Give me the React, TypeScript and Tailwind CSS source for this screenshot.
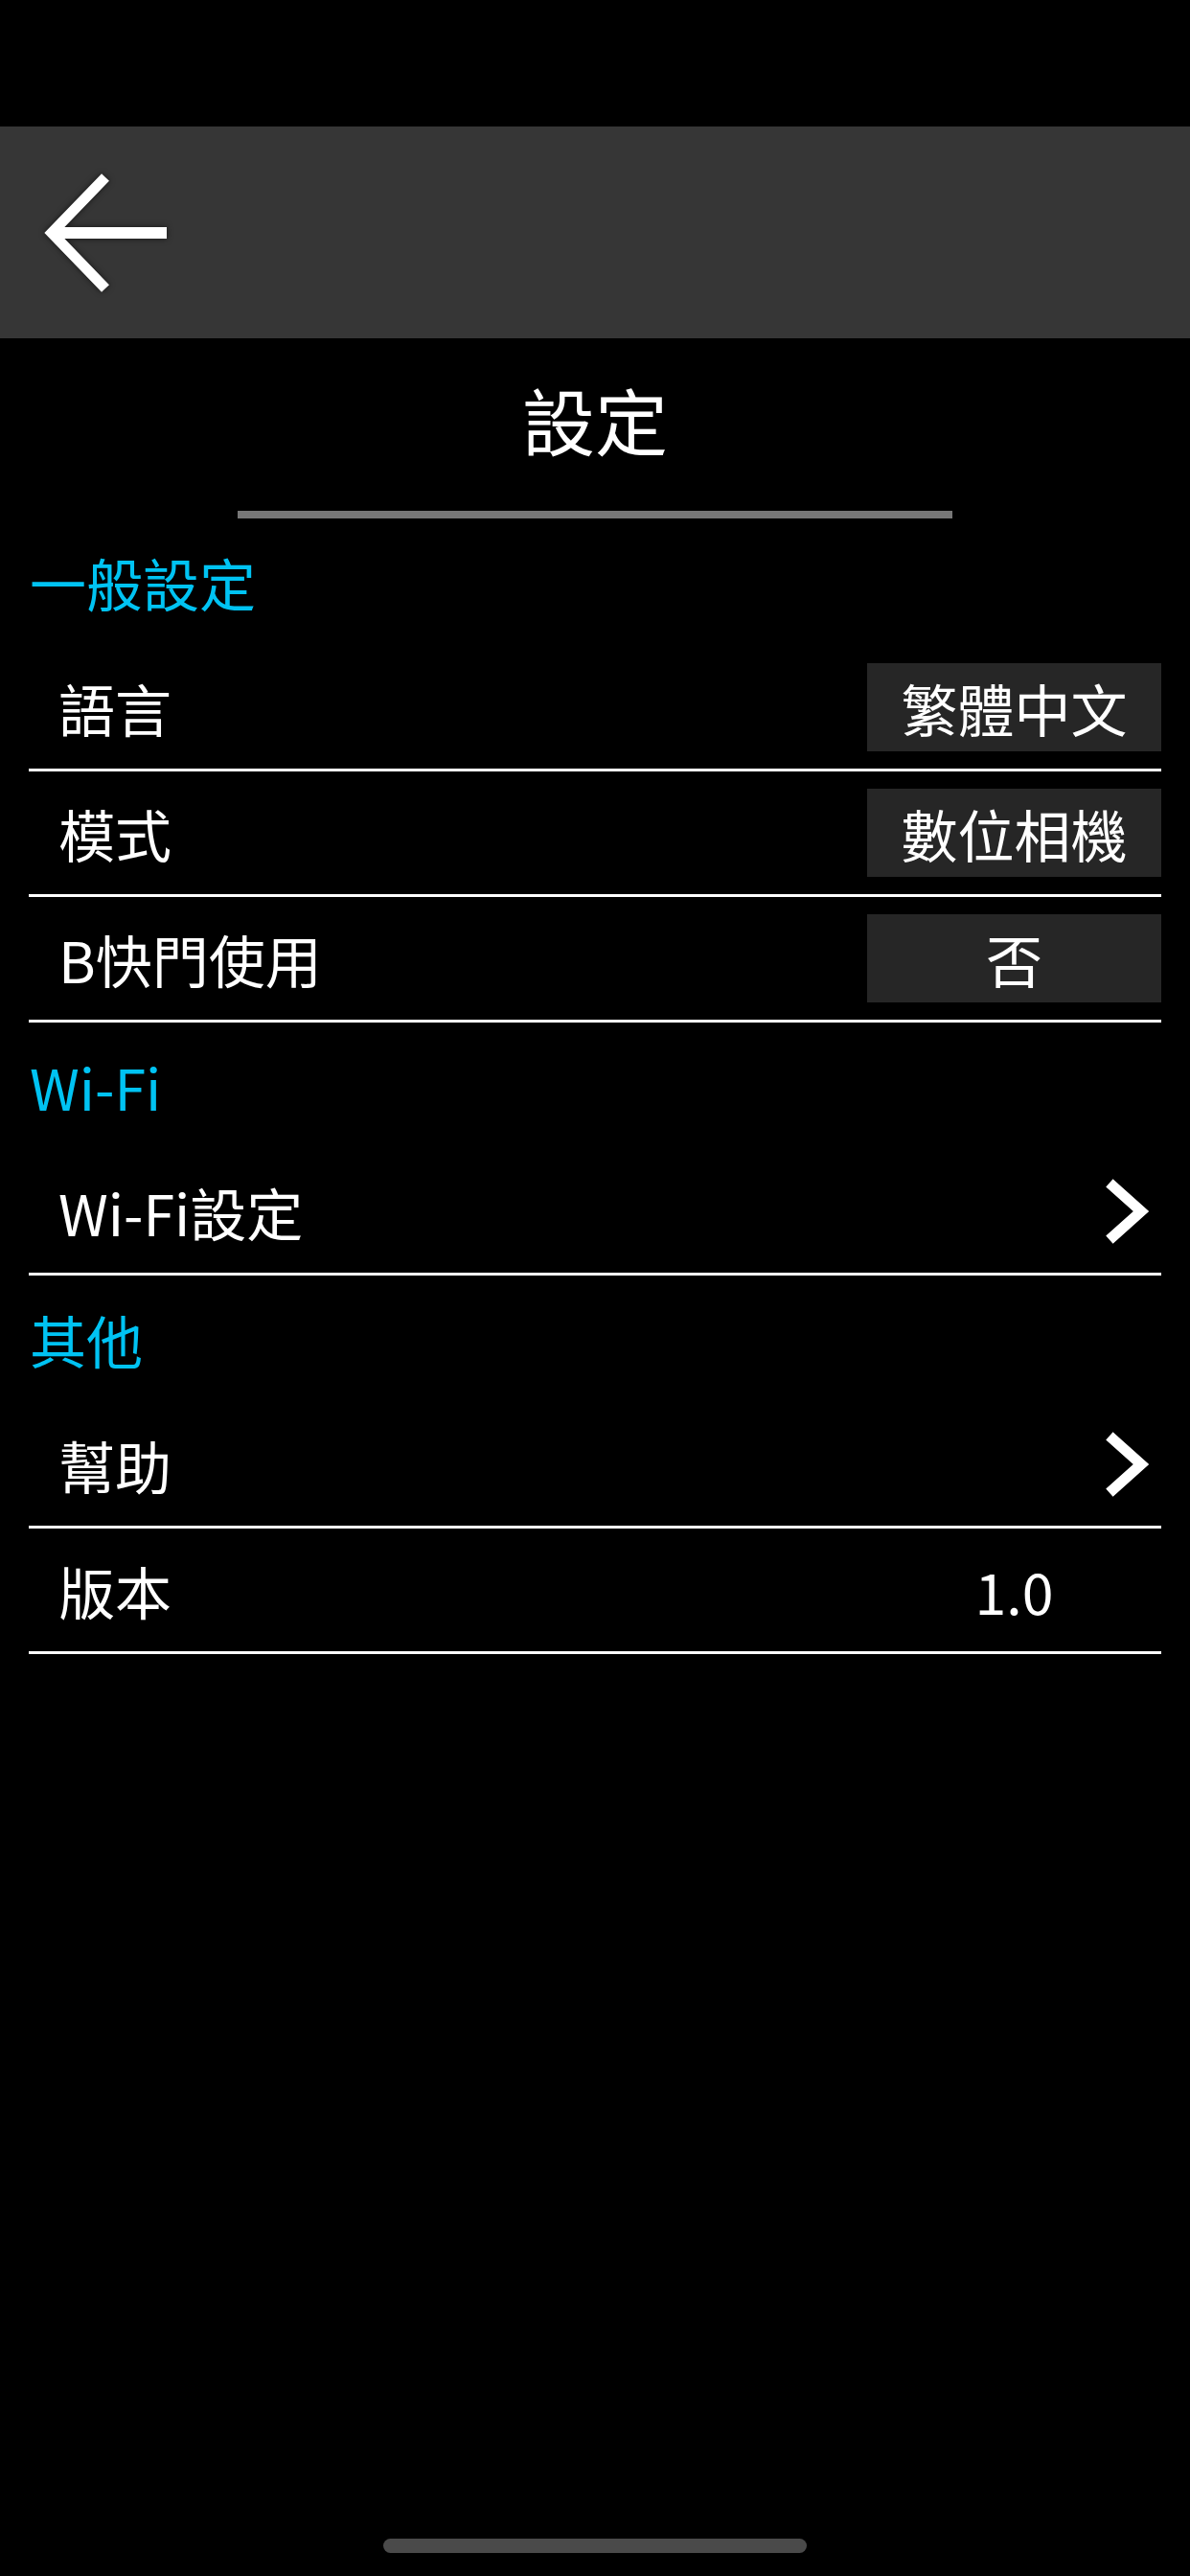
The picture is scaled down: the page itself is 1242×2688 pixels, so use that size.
import React from 'react';

type Row =
  | { label: string; kind: 'select'; value: string }
  | { label: string; kind: 'link' }
  | { label: string; kind: 'text'; value: string };

interface Section {
  title: string;
  rows: Row[];
}

const sections: Section[] = [
  {
    title: '一般設定',
    rows: [
      { label: '語言', kind: 'select', value: '繁體中文' },
      { label: '模式', kind: 'select', value: '數位相機' },
      { label: 'B快門使用', kind: 'select', value: '否' },
    ],
  },
  {
    title: 'Wi-Fi',
    rows: [{ label: 'Wi-Fi設定', kind: 'link' }],
  },
  {
    title: '其他',
    rows: [
      { label: '幫助', kind: 'link' },
      { label: '版本', kind: 'text', value: '1.0' },
    ],
  },
];

const BackArrow = () => (
  <svg width="132" height="132" viewBox="0 0 132 132" fill="none" className="drop-shadow-[0_0_3px_rgba(0,0,0,0.6)]">
    <path d="M128 66 H10" stroke="white" strokeWidth="12" />
    <path d="M64 8 L8 66 L64 124" stroke="white" strokeWidth="11" strokeLinejoin="miter" />
  </svg>
);

const Chevron = () => (
  <svg width="44" height="68" viewBox="0 0 44 68" fill="none" overflow="visible">
    <polyline points="7,8 36,34 7,60" stroke="white" strokeWidth="11" strokeLinecap="square" strokeLinejoin="miter" />
  </svg>
);

const SettingRow = ({ row }: { row: Row }) => (
  <div className="h-[131px] border-b-[3px] border-white flex items-center justify-between">
    <span className="pl-[31px] text-[59px] leading-none text-white">{row.label}</span>
    {row.kind === 'select' && (
      <div className="w-[307px] h-[92px] bg-[#262626] flex items-center justify-center text-[59px] leading-none text-white">
        {row.value}
      </div>
    )}
    {row.kind === 'text' && (
      <div className="w-[307px] text-center text-[59px] leading-none text-white">{row.value}</div>
    )}
    {row.kind === 'link' && (
      <div className="pr-[13px] flex items-center">
        <Chevron />
      </div>
    )}
  </div>
);

export default function App() {
  return (
    <div
      className="min-h-[2688px] w-full bg-black flex flex-col"
      style={{ fontFamily: '"Noto Sans CJK TC", "Noto Sans", sans-serif' }}
    >
      {/* status bar area */}
      <div className="h-[132px]" />

      {/* top bar */}
      <div className="h-[221px] bg-[#363636] flex items-center pl-[46px]">
        <BackArrow />
      </div>

      {/* page title */}
      <div className="h-[180px] flex items-center justify-center pb-[12px]">
        <h1 className="text-[76px] leading-none text-white font-normal">設定</h1>
      </div>
      <div className="w-[746px] h-[8px] bg-[#777777] mx-auto" />

      {/* settings list */}
      <div className="px-[30px]">
        {sections.map((section) => (
          <div key={section.title}>
            <div className="h-[133px] flex items-center">
              <span className="pl-[1px] text-[59px] leading-none text-[#00c3f3]">{section.title}</span>
            </div>
            {section.rows.map((row) => (
              <SettingRow key={row.label} row={row} />
            ))}
          </div>
        ))}
      </div>

      {/* home indicator */}
      <div className="mt-auto mb-[24px] mx-auto w-[442px] h-[15px] rounded-full bg-[#4a4a4a]" />
    </div>
  );
}
